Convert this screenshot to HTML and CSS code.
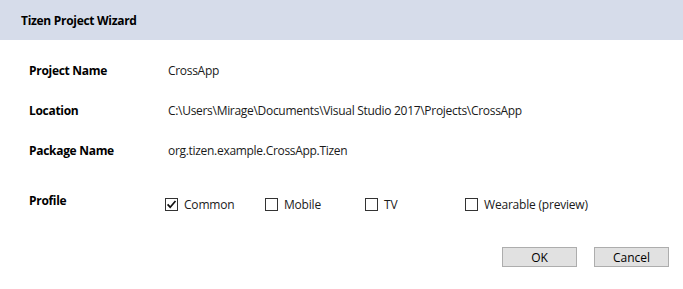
FILE: index.html
```html
<!DOCTYPE html>
<html>
<head>
<meta charset="utf-8">
<link rel="stylesheet" href="styles.css">
</head>
<body>
<div class="header">Tizen Project Wizard</div>
<div class="form">
  <div class="row">
    <div class="label">Project Name</div>
    <div class="value">CrossApp</div>
  </div>
  <div class="row">
    <div class="label">Location</div>
    <div class="value">C:\Users\Mirage\Documents\Visual Studio 2017\Projects\CrossApp</div>
  </div>
  <div class="row">
    <div class="label">Package Name</div>
    <div class="value">org.tizen.example.CrossApp.Tizen</div>
  </div>
  <div class="row profile">
    <div class="label">Profile</div>
    <div class="options">
      <label class="opt"><span class="box"><svg width="11" height="11" viewBox="0 0 11 11"><path d="M1.6 5.4 L4.2 8.2 L9.5 2.0" fill="none" stroke="#111" stroke-width="1.7"/></svg></span>Common</label>
      <label class="opt"><span class="box"></span>Mobile</label>
      <label class="opt"><span class="box"></span>TV</label>
      <label class="opt"><span class="box"></span>Wearable (preview)</label>
    </div>
  </div>
</div>
<div class="buttons">
  <button class="btn">OK</button>
  <button class="btn">Cancel</button>
</div>
</body>
</html>
```

FILE: styles.css
```css
html, body {
  margin: 0;
  padding: 0;
  background: #ffffff;
}
body {
  width: 683px;
  height: 289px;
  overflow: hidden;
  font-family: "Open Sans", "Noto Sans", sans-serif;
  font-size: 12px;
  color: #1a1a1a;
}
.header {
  height: 40px;
  background: #d6dcea;
  display: flex;
  align-items: center;
  padding-left: 21px;
  font-weight: 700;
  font-size: 12px;
  color: #000;
  letter-spacing: -0.3px;
}
.form {
  padding-left: 29px;
  margin-top: 10px;
}
.row {
  display: grid;
  grid-template-columns: 139px 1fr;
  height: 40px;
  align-items: center;
}
.row.profile {
  margin-top: 10px;
  grid-template-columns: 136px 1fr;
}
.label {
  font-weight: 700;
  color: #000;
  letter-spacing: -0.3px;
}
.value {
  letter-spacing: -0.3px;
}
.options {
  display: flex;
  margin-top: 9px;
}
.opt {
  width: 100px;
  flex: none;
  display: flex;
  align-items: center;
  white-space: nowrap;
  letter-spacing: -0.2px;
}
.opt:last-child {
  width: auto;
}
.box {
  width: 11px;
  height: 11px;
  border: 1px solid #333;
  margin-right: 6px;
  display: flex;
  align-items: center;
  justify-content: center;
  background: #fff;
  flex: none;
}
.buttons {
  display: flex;
  justify-content: flex-end;
  gap: 17px;
  padding-right: 14px;
  margin-top: 27px;
}
.btn {
  width: 75px;
  height: 20px;
  background: #e1e1e1;
  border: 1px solid #adadad;
  font-family: "Open Sans", "Noto Sans", sans-serif;
  font-size: 12px;
  color: #000;
  padding: 0;
}
```
